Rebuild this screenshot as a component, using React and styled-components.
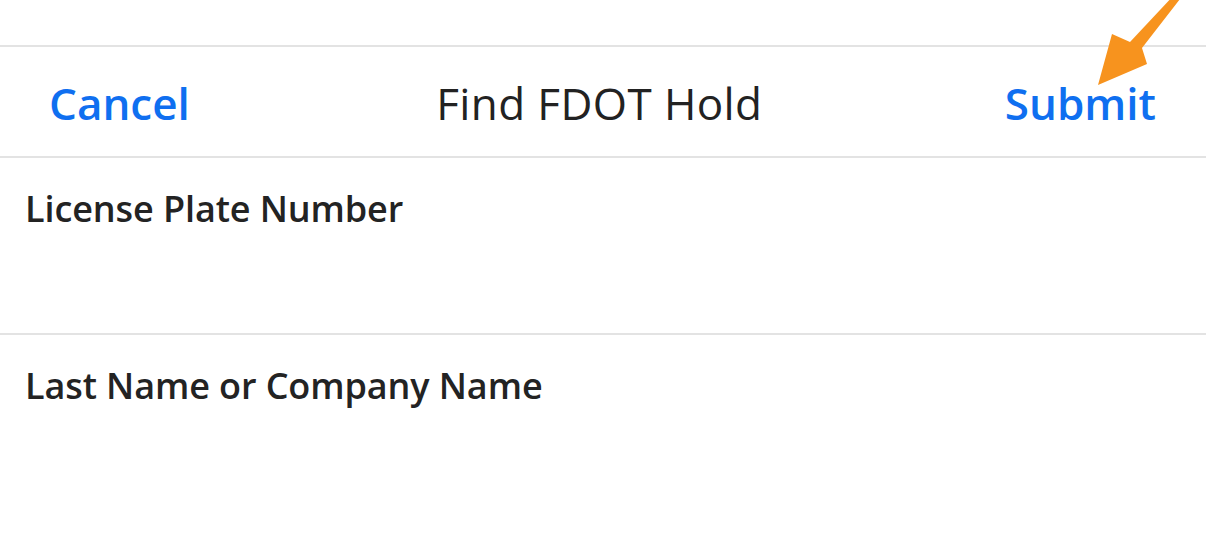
import React from "react";
import styled, { createGlobalStyle } from "styled-components";

const Global = createGlobalStyle`
  body {
    margin: 0;
    background: #fff;
    font-family: "Open Sans", "Noto Sans", sans-serif;
  }
`;

export default function App() {
  return (
    <Page>
      <Global />
      <TopGap />
      <NavBar>
        <NavButton>Cancel</NavButton>
        <Title>Find FDOT Hold</Title>
        <NavButton>Submit</NavButton>
      </NavBar>
      <Field>
        <Label>License Plate Number</Label>
      </Field>
      <Field last>
        <Label>Last Name or Company Name</Label>
      </Field>
      <Arrow viewBox="0 0 100 100" width="100" height="100">
        <path
          d="M77 -4 L82 1 L44 50 L49 66 L0 87 L14 36 L32 44 Z"
          fill="#f7931e"
        />
      </Arrow>
    </Page>
  );
}

const Page = styled.div`
  position: relative;
  width: 1206px;
  height: 539px;
  overflow: hidden;
  background: #fff;
`;
const TopGap = styled.div`
  height: 45px;
  border-bottom: 2px solid #e3e3e3;
`;
const NavBar = styled.div`
  height: 109px;
  display: flex;
  align-items: center;
  justify-content: space-between;
  padding: 0 50px 0 49px;
  border-bottom: 2px solid #e3e3e3;
`;
const NavButton = styled.span`
  font-size: 44px;
  font-weight: 600;
  color: #0f6ff0;
  padding-top: 2px;
`;
const Title = styled.span`
  font-size: 44px;
  font-weight: 400;
  color: #222;
  letter-spacing: 0.4px;
  padding-top: 2px;
  margin-left: 4px;
`;
const Field = styled.div`
  height: ${(p) => (p.last ? "auto" : "177px")};
  border-bottom: ${(p) => (p.last ? "none" : "2px solid #e3e3e3")};
  padding: 26px 26px 0 25px;
  box-sizing: border-box;
`;
const Label = styled.div`
  font-size: 36px;
  font-weight: 600;
  color: #232323;
  letter-spacing: -0.1px;
`;
const Arrow = styled.svg`
  position: absolute;
  left: 1098px;
  top: -2px;
`;
